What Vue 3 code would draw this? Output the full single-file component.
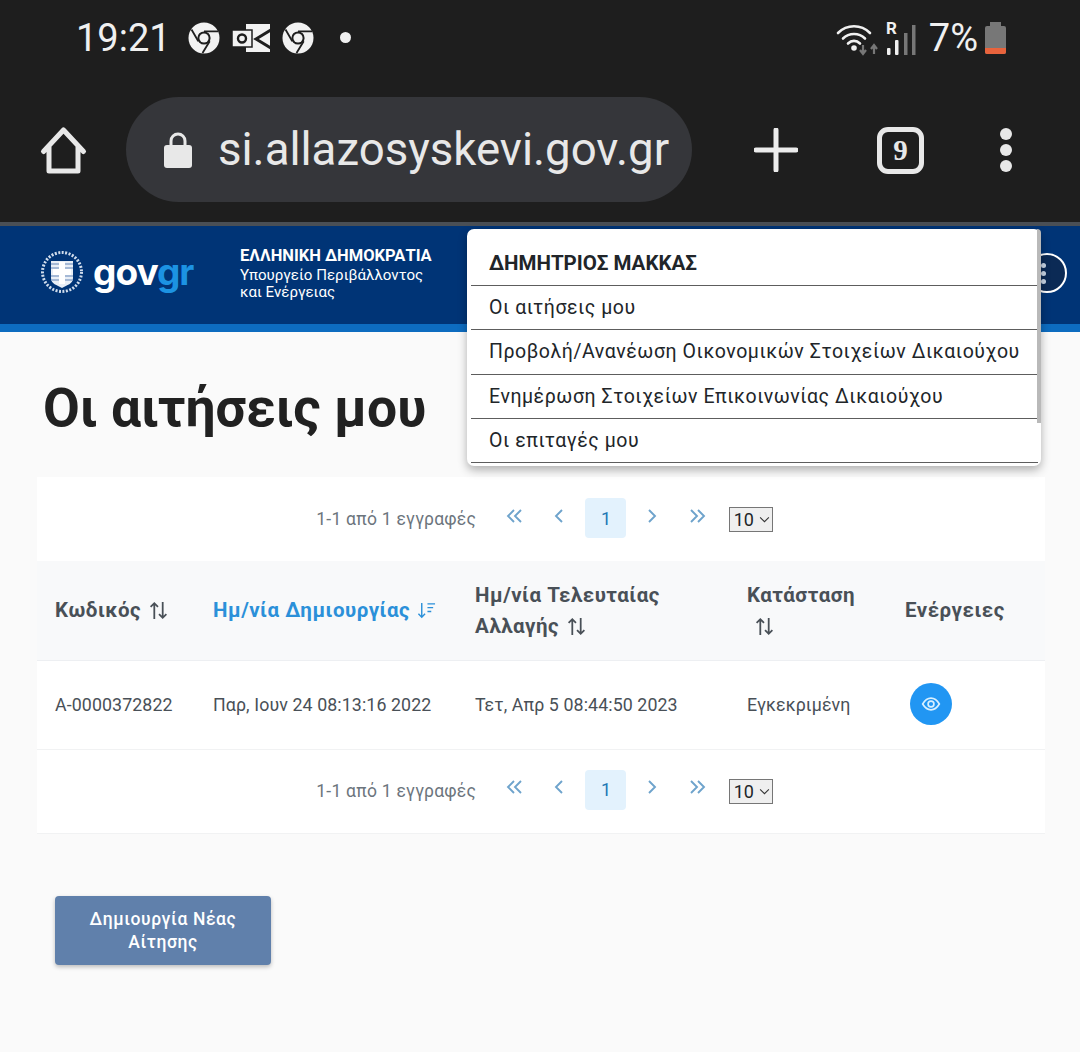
<script setup>
const sortPath = 'M6 18V3M2.500 6.500 6 3l3.500 3.500M14 2v15M10.500 13.500 14 17l3.500-3.500'
const chromeLines = 'M16 9.400H30M10.300 19.300 3.500 7.500M21.700 19.300 14.500 31'
</script>

<template>
  <div class="page">
    <header class="status">
      <span class="time">19:21</span>
      <svg class="chrome" viewBox="0 0 32 32"><circle cx="16" cy="16" r="15.500" fill="#f2f2f2"/><circle cx="16" cy="16" r="6.600" fill="#1e1e1e"/><circle cx="16" cy="16" r="4.600" fill="#f2f2f2"/><path :d="chromeLines" stroke="#1e1e1e" stroke-width="1.800" fill="none"/></svg>
      <svg class="outlook" viewBox="0 0 38 28"><path d="M14 0h24v28H14z" fill="#f2f2f2"/><path d="M39 6 24 15l15 9" fill="none" stroke="#1e1e1e" stroke-width="3"/><rect x="0" y="6" width="20" height="17" fill="#f2f2f2" stroke="#1e1e1e" stroke-width="1.500"/><circle cx="10" cy="14.500" r="4" fill="none" stroke="#1e1e1e" stroke-width="2.400"/></svg>
      <svg class="chrome" viewBox="0 0 32 32"><circle cx="16" cy="16" r="15.500" fill="#f2f2f2"/><circle cx="16" cy="16" r="6.600" fill="#1e1e1e"/><circle cx="16" cy="16" r="4.600" fill="#f2f2f2"/><path :d="chromeLines" stroke="#1e1e1e" stroke-width="1.800" fill="none"/></svg>
      <span class="dot"></span>
      <span class="grow"></span>
      <svg class="wifi" viewBox="0 0 44 34"><path d="M2 11C11 2 25 2 34 11M7 16.500C13 10.500 23 10.500 29 16.500M12 21.500C15.500 18 20.500 18 24 21.500" fill="none" stroke="#f0f0f0" stroke-width="2.600" stroke-linecap="round"/><circle cx="18" cy="26" r="2.800" fill="#f0f0f0"/><path d="M27 23v8M24 28l3 4 3-4M38 32v-9M35 27l3-4 3 4" fill="none" stroke="#777" stroke-width="2.200"/></svg>
      <svg class="signal" viewBox="0 0 30 34"><rect x="1" y="26" width="3.500" height="7" rx="1" fill="#f0f0f0"/><rect x="9" y="18" width="3.500" height="15" rx="1" fill="#f0f0f0"/><rect x="18" y="11" width="3.500" height="22" fill="#777"/><rect x="26" y="3" width="3.500" height="30" fill="#777"/></svg>
      <span class="roam">R</span>
      <span class="pct">7%</span>
      <span class="battery"><i></i></span>
    </header>

    <div class="toolbar">
      <svg class="home" viewBox="0 0 48 50"><path d="M4 25.500 24 4l20 21.500M9.500 21v24h29V21" fill="none" stroke="#e8e8e8" stroke-width="5" stroke-linejoin="round" stroke-linecap="round"/></svg>
      <div class="url">
        <svg class="lock" viewBox="0 0 30 38"><path d="M8 16V10a7 7 0 0 1 14 0v6" fill="none" stroke="#e8e8e8" stroke-width="3"/><rect x="1" y="14" width="28" height="23" rx="3" fill="#e8e8e8"/></svg>
        <span>si.allazosyskevi.gov.gr</span>
      </div>
      <svg class="plus" viewBox="0 0 44 44"><path d="M22 2v40M2 22h40" stroke="#ececec" stroke-width="5" stroke-linecap="round"/></svg>
      <span class="tabs">9</span>
      <span class="more"><i></i><i></i><i></i></span>
    </div>

    <div class="site">
      <div class="brand">
        <svg class="emblem" viewBox="0 0 44 44">
          <circle cx="22" cy="22" r="19.500" fill="none" stroke="#cfdcec" stroke-width="3" stroke-dasharray="2 1.500"/>
          <path d="M11 11h22v17c0 6-6 7-11 10-5-3-11-4-11-10z" fill="#e8eef6"/>
          <path d="M11 14h22M11 18h22M11 26h22M11 30h22" stroke="#8fa8cc" stroke-width="1.500"/>
          <path d="M22 12v22M13 22h18" stroke="#fff" stroke-width="6"/>
        </svg>
        <span class="gov">gov<b>gr</b></span>
      </div>
      <div class="ministry">
        <strong>ΕΛΛΗΝΙΚΗ ΔΗΜΟΚΡΑΤΙΑ</strong>
        <span>Υπουργείο Περιβάλλοντος</span>
        <span>και Ενέργειας</span>
      </div>
      <span class="user"><i></i><i></i><i></i></span>
      <nav class="menu">
        <div class="menu-item title">ΔΗΜΗΤΡΙΟΣ ΜΑΚΚΑΣ</div>
        <div class="menu-item">Οι αιτήσεις μου</div>
        <div class="menu-item">Προβολή/Ανανέωση Οικονομικών Στοιχείων Δικαιούχου</div>
        <div class="menu-item">Ενημέρωση Στοιχείων Επικοινωνίας Δικαιούχου</div>
        <div class="menu-item">Οι επιταγές μου</div>
        <span class="scroll"></span>
      </nav>
    </div>

    <main class="content">
      <h1>Οι αιτήσεις μου</h1>
      <section class="table">
        <div class="pager">
          <span class="count">1-1 από 1 εγγραφές</span>
          <span class="pbtn"><svg viewBox="0 0 20 20"><path d="M9 4 3 10l6 6M16 4l-6 6 6 6"/></svg></span>
          <span class="pbtn"><svg viewBox="0 0 20 20"><path d="M12 4l-6 6 6 6"/></svg></span>
          <span class="pbtn current">1</span>
          <span class="pbtn"><svg viewBox="0 0 20 20"><path d="M8 4l6 6-6 6"/></svg></span>
          <span class="pbtn"><svg viewBox="0 0 20 20"><path d="M4 4l6 6-6 6M11 4l6 6-6 6"/></svg></span>
          <span class="size-wrap">
            <select class="size"><option>10</option></select>
            <svg class="caret" viewBox="0 0 12 8"><path d="M1 1.500 6 6.500l5-5"/></svg>
          </span>
        </div>

        <div class="grid head">
          <div class="cell">Κωδικός <svg class="sort" viewBox="0 0 20 20"><path :d="sortPath"/></svg></div>
          <div class="cell active">Ημ/νία Δημιουργίας <svg class="sort small" viewBox="0 0 20 20"><path d="M5 2v15M1.500 13.500 5 17l3.500-3.500M11 3h8M11 7h6M11 11h4"/></svg></div>
          <div class="cell">Ημ/νία Τελευταίας Αλλαγής <svg class="sort" viewBox="0 0 20 20"><path :d="sortPath"/></svg></div>
          <div class="cell">Κατάσταση <br />&nbsp;<svg class="sort" viewBox="0 0 20 20"><path :d="sortPath"/></svg></div>
          <div class="cell">Ενέργειες</div>
        </div>

        <div class="grid row">
          <div class="cell">Α-0000372822</div>
          <div class="cell">Παρ, Ιουν 24 08:13:16 2022</div>
          <div class="cell">Τετ, Απρ 5 08:44:50 2023</div>
          <div class="cell">Εγκεκριμένη</div>
          <div class="cell">
            <span class="view"><svg viewBox="0 0 24 24"><path d="M2 12c3-5 6.500-7 10-7s7 2 10 7c-3 5-6.500 7-10 7s-7-2-10-7z"/><circle cx="12" cy="12" r="3.500"/></svg></span>
          </div>
        </div>

        <div class="pager last">
          <span class="count">1-1 από 1 εγγραφές</span>
          <span class="pbtn"><svg viewBox="0 0 20 20"><path d="M9 4 3 10l6 6M16 4l-6 6 6 6"/></svg></span>
          <span class="pbtn"><svg viewBox="0 0 20 20"><path d="M12 4l-6 6 6 6"/></svg></span>
          <span class="pbtn current">1</span>
          <span class="pbtn"><svg viewBox="0 0 20 20"><path d="M8 4l6 6-6 6"/></svg></span>
          <span class="pbtn"><svg viewBox="0 0 20 20"><path d="M4 4l6 6-6 6M11 4l6 6-6 6"/></svg></span>
          <span class="size-wrap">
            <select class="size"><option>10</option></select>
            <svg class="caret" viewBox="0 0 12 8"><path d="M1 1.500 6 6.500l5-5"/></svg>
          </span>
        </div>
      </section>
      <button class="create">Δημιουργία Νέας Αίτησης</button>
    </main>
  </div>
</template>

<style scoped>
.page {
  width: 1080px;
  height: 1052px;
  overflow: hidden;
  background: #fafafa;
  font-family: Roboto, "Noto Sans", sans-serif;
  color: #495057;
}
.status {
  height: 75px;
  background: #1e1e1e;
  box-sizing: border-box;
  display: flex;
  align-items: center;
  padding: 0 74px 0 76px;
  color: #f0f0f0;
  position: relative;
}
.time { font-size: 38px; font-weight: 400; margin-right: 17px; line-height: 1; }
.chrome { width: 32px; height: 32px; }
.outlook { width: 38px; height: 28px; margin: 0 12px; }
.dot { width: 11px; height: 11px; background: #f0f0f0; border-radius: 50%; margin-left: 26px; }
.grow { flex: 1; }
.wifi { width: 44px; height: 34px; margin-top: 2px; }
.signal { width: 30px; height: 34px; margin: 2px 0 0 6px; }
.roam { position: absolute; left: 886px; top: 18px; font-size: 17px; font-weight: 700; }
.pct { font-size: 38px; font-weight: 400; margin-left: 13px; line-height: 1; }
.battery {
  width: 21px;
  height: 28px;
  margin: 5px 0 0 7px;
  background: #777;
  border-radius: 2px;
  position: relative;
  display: flex;
  align-items: flex-end;
}
.battery::before {
  content: "";
  position: absolute;
  left: 5px;
  top: -4px;
  width: 11px;
  height: 4px;
  background: #777;
}
.battery i { flex: 1; height: 6px; background: #e8633c; border-radius: 0 0 2px 2px; }

.toolbar {
  height: 147px;
  background: #1e1e1e;
  display: flex;
  align-items: flex-start;
  padding: 22px 0 0 39px;
  box-sizing: border-box;
}
.home { width: 49px; height: 50px; margin: 29px 38px 0 0; }
.url {
  width: 566px;
  height: 105px;
  border-radius: 53px;
  background: #35363a;
  display: flex;
  align-items: center;
  padding-left: 37px;
  box-sizing: border-box;
  color: #e8e8e8;
  font-size: 45.600px;
  white-space: nowrap;
}
.lock { width: 30px; height: 38px; margin-right: 25px; }
.plus { width: 44px; height: 44px; margin: 31px 0 0 62px; }
.tabs {
  width: 47px;
  height: 47px;
  margin: 30px 0 0 79px;
  border: 5px solid #e8e8e8;
  border-radius: 11px;
  box-sizing: border-box;
  color: #e8e8e8;
  font: 700 29px/36px "Liberation Serif", serif;
  text-align: center;
}
.more { display: flex; flex-direction: column; gap: 4px; margin: 31px 0 0 76px; }
.more i { width: 12px; height: 12px; border-radius: 50%; background: #e8e8e8; }

.site {
  height: 110px;
  border-top: 4px solid #4a4f55;
  border-bottom: 8px solid #0d6cc0;
  box-sizing: border-box;
  background: #003476;
  display: flex;
  align-items: flex-start;
  position: relative;
  color: #fff;
}
.brand { display: flex; align-items: center; margin: 24px 0 0 40px; width: 200px; }
.emblem { width: 44px; height: 44px; }
.gov { font: 700 37px/44px Inter, sans-serif; margin-left: 9px; letter-spacing: -1px; color: #fff; }
.gov b { color: #1c93e3; font-weight: 700; }
.ministry { display: flex; flex-direction: column; margin-top: 18px; font-size: 15.100px; line-height: 17px; }
.ministry strong { font-size: 16.500px; font-weight: 700; line-height: 23px; }
.user {
  position: absolute;
  left: 1027px;
  top: 27px;
  width: 40px;
  height: 40px;
  box-sizing: border-box;
  border: 2px solid #fff;
  border-radius: 50%;
  background: #0b2a55;
  display: flex;
  flex-direction: column;
  align-items: center;
  justify-content: center;
  gap: 3px;
  padding-right: 8px;
}
.user i { width: 5px; height: 5px; background: #c9d6e6; border-radius: 50%; }
.menu {
  position: absolute;
  left: 467px;
  top: 3px;
  width: 574px;
  height: 237px;
  background: #fff;
  border-radius: 7px;
  box-shadow: 0 4px 10px rgba(0, 0, 0, .3);
  box-sizing: border-box;
  padding: 13px 3px 0 4px;
  color: #212529;
  z-index: 2;
}
.menu-item {
  height: 44.300px;
  line-height: 43px;
  box-sizing: border-box;
  padding-left: 18px;
  border-bottom: 1px solid #5d5d5d;
  font-size: 19.500px;
  letter-spacing: .55px;
  white-space: nowrap;
}
.menu-item.title { height: 44px; font-weight: 700; font-size: 20.500px; letter-spacing: 0; line-height: 42px; }
.scroll { position: absolute; right: 0; top: 0; width: 4px; height: 194px; background: #b9b9b9; border-top-right-radius: 7px; }

.content { padding: 0 35px 0 37px; }
h1 {
  margin: 0;
  height: 145px;
  padding: 45px 0 0 6px;
  box-sizing: border-box;
  font-size: 53.400px;
  line-height: 61px;
  font-weight: 700;
  color: #212121;
}
.table { background: #fff; }
.pager {
  height: 84px;
  display: flex;
  align-items: center;
  justify-content: center;
  padding: 0 0 2px 7px;
  color: #6c757d;
  font-size: 17.500px;
  box-sizing: border-box;
}
.pager.last { border-bottom: 1px solid #f1f2f3; padding-bottom: 4px; }
.count { margin: 2px 16px 0 0; letter-spacing: .25px; }
.pbtn {
  width: 41px;
  height: 40px;
  margin: 0 2.250px;
  display: flex;
  align-items: center;
  justify-content: center;
  border-radius: 4px;
}
.pbtn svg { width: 20px; height: 20px; margin-top: -5px; fill: none; stroke: #6ea3cc; stroke-width: 1.900; }
.pbtn.current { background: #e3f2fd; color: #1f78b4; font-size: 18px; }
.size-wrap { position: relative; margin: 3px 0 0 9px; display: flex; }
.size {
  appearance: none;
  width: 44px;
  height: 25px;
  box-sizing: border-box;
  border: 1px solid #767676;
  border-radius: 0;
  background: #efefef;
  padding: 0 0 0 4px;
  font: 18px Roboto, sans-serif;
  color: #212529;
}
.caret {
  position: absolute;
  right: 3px;
  top: 9px;
  width: 11px;
  height: 7px;
  fill: none;
  stroke: #333;
  stroke-width: 1.200;
  pointer-events: none;
}
.grid {
  display: grid;
  grid-template-columns: 158px 262px 272px 158px 158px;
  align-items: center;
}
.head {
  height: 100px;
  background: #f8f9fa;
  border-bottom: 1px solid #edeff2;
  box-sizing: border-box;
  font-size: 20.500px;
  font-weight: 700;
  line-height: 31px;
  letter-spacing: .5px;
}
.row {
  height: 89px;
  padding-bottom: 2px;
  font-size: 17.800px;
  letter-spacing: .1px;
  border-bottom: 1px solid #f1f2f3;
  box-sizing: border-box;
}
.cell { padding-left: 18px; padding-right: 10px; }
.active { color: #2b90d9; white-space: nowrap; }
.sort { width: 21px; height: 21px; vertical-align: -4px; fill: none; stroke: #495057; stroke-width: 1.700; margin-left: 1px; }
.sort.small { width: 19px; height: 19px; stroke: #2b90d9; stroke-width: 1.500; vertical-align: -3px; }
.view {
  width: 42px;
  height: 42px;
  margin-left: 5px;
  border-radius: 50%;
  background: #2196f3;
  display: flex;
  align-items: center;
  justify-content: center;
}
.view svg { width: 20px; height: 20px; fill: none; stroke: #d8f0ff; stroke-width: 2; }
.create {
  display: block;
  width: 216px;
  height: 69px;
  margin: 62px 0 0 18px;
  border: 0;
  border-radius: 4px;
  background: #6080ab;
  color: #fff;
  font: 500 17.500px/23px Roboto, sans-serif;
  letter-spacing: .6px;
  box-shadow: 0 2px 4px rgba(0, 0, 0, .25);
  padding: 0 30px;
}
</style>
